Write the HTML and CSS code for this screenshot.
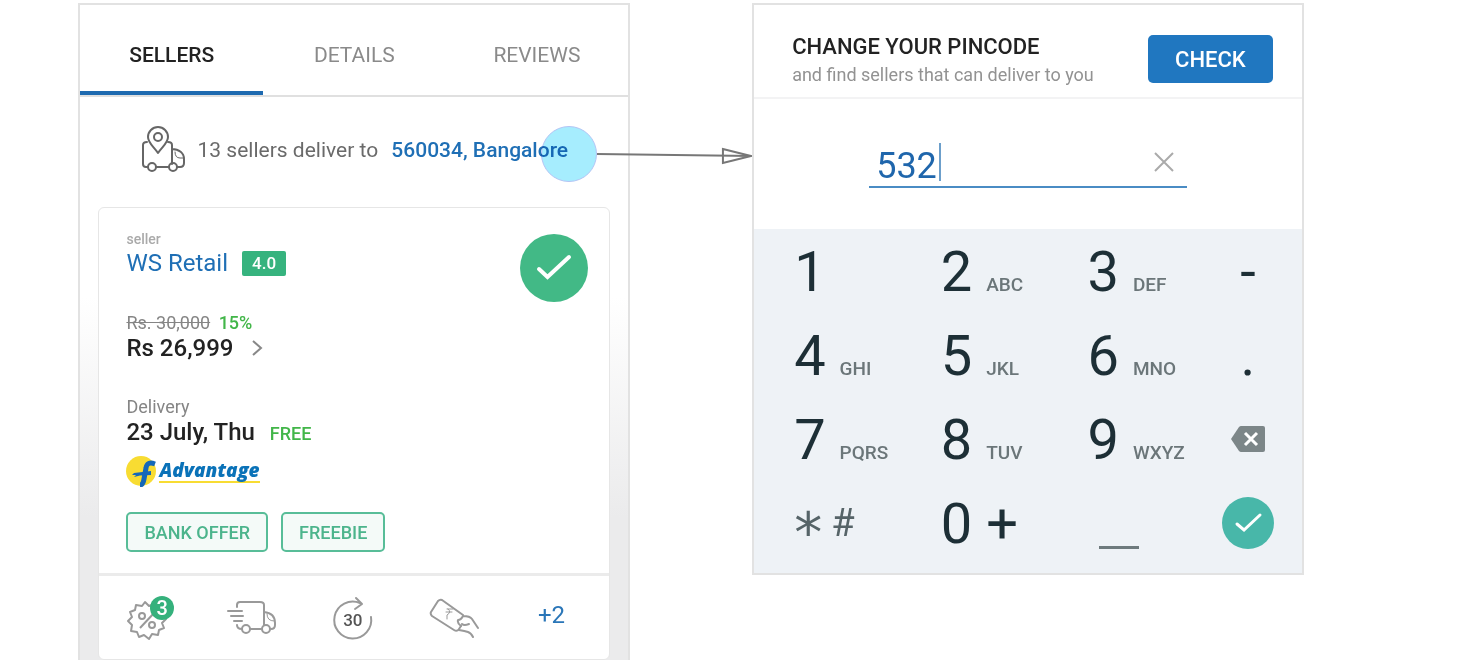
FILE: index.html
```html
<!DOCTYPE html>
<html lang="en">
<head>
<meta charset="utf-8">
<title>Sellers and pincode</title>
<meta name="viewport" content="width=device-width, initial-scale=1">
<link rel="stylesheet" href="styles.css">
</head>
<body>
<main class="flow">
  <section class="panel product">
    <nav class="tabs">
      <button class="tab tab-active" type="button">SELLERS</button>
      <button class="tab" type="button">DETAILS</button>
      <button class="tab" type="button">REVIEWS</button>
    </nav>
    <div class="panel-body">
      <div class="deliver">
        <svg class="deliver-icon" width="44" height="48" viewBox="0 0 44 48" fill="none" stroke="#666" stroke-width="2" stroke-linecap="round" stroke-linejoin="round">
          <path d="M6 16C3 16 2 17 2 19V38Q2 41 5 41H7M15 41H28M36 41H39Q43 41 43 37V33C43 27 38 23 31 23V38M27 16Q31 16 31 19V24"/>
          <path d="M17 27C13 21 7 17 7 11A10 10 0 0 1 27 11C27 17 21 21 17 27Z"/>
          <circle cx="17" cy="11" r="4"/><circle cx="11" cy="41" r="4"/><circle cx="32" cy="41" r="4"/>
          <path d="M34 26Q34 32 39 32H42" stroke-width="1"/>
        </svg>
        <p class="deliver-text">13 sellers deliver to <a class="place" href="#pincode">560034, Bangalore<span class="touch"></span></a></p>
      </div>
      <article class="card">
        <div class="card-body">
          <div class="card-head">
            <div>
              <p class="caption">seller</p>
              <p class="line seller"><a class="seller-link" href="#seller">WS Retail</a><span class="rating">4.0</span></p>
            </div>
            <svg class="chosen" width="70" height="70" viewBox="0 0 70 70"><circle cx="35" cy="35" r="34" fill="#42b986"/><path d="M20 36L28.500 44L50 24" fill="none" stroke="#fff" stroke-width="4" stroke-linecap="round"/></svg>
          </div>
          <div class="group">
            <p class="label"><s>Rs. 30,000</s> <span class="green">15%</span></p>
            <p class="line strong">Rs 26,999<svg class="chevron" width="12" height="18" viewBox="0 0 12 18"><path d="M2 2L10 9L2 16" fill="none" stroke="#888" stroke-width="2"/></svg></p>
          </div>
          <div class="group">
            <p class="label">Delivery</p>
            <p class="line strong">23 July, Thu<span class="free">FREE</span></p>
          </div>
          <div class="brand">
            <svg width="33" height="32" viewBox="0 0 33 32"><circle cx="15" cy="16" r="15" fill="#f8dc32"/><path d="M29 9Q21 6 20 13L18 24Q17 30 14 30" fill="none" stroke="#1468b8" stroke-width="5"/><path d="M8 18L25 16V20L14 20.500L8 22L10 20L6 20Z" fill="#1468b8"/></svg>
            <span class="brand-name">Advantage</span>
          </div>
          <div class="offers">
            <button class="offer" type="button">BANK OFFER</button>
            <button class="offer" type="button">FREEBIE</button>
          </div>
        </div>
        <footer class="perks">
          <button class="perk" type="button" aria-label="Offers">
            <svg width="50" height="46" viewBox="0 0 50 46" fill="none" stroke="#999" stroke-width="2" stroke-linejoin="round">
              <path d="M20 7L24 11L29 9L31 14L37 14L36 20L41 24L37 28L39 33L34 35L33 40L27 39L24 44L19 40L14 42L12 37L6 36L7 30L3 26L7 22L5 17L10 15L11 10L17 11Z"/>
              <circle cx="17" cy="21" r="3"/><circle cx="27" cy="30" r="3"/><path d="M15 33L30 17"/>
            </svg>
            <span class="count">3</span>
          </button>
          <button class="perk" type="button" aria-label="Fast delivery">
            <svg width="50" height="46" viewBox="0 0 50 46" fill="none" stroke="#999" stroke-width="2" stroke-linecap="round" stroke-linejoin="round">
              <path d="M11 12V10Q11 7 14 7H34Q38 7 38 10V30M38 17Q49 18 49 28V30Q49 34 45 34M35 34H24M16 34Q11 34 11 30"/>
              <path d="M2 16H16M5 21H17M8 26H16"/><circle cx="20" cy="34" r="4"/><circle cx="40" cy="34" r="4"/>
              <path d="M41 19Q41 26 48 26" stroke-width="1"/>
            </svg>
          </button>
          <button class="perk" type="button" aria-label="30 day returns">
            <svg width="50" height="46" viewBox="0 0 50 46" fill="none" stroke="#999" stroke-width="2" stroke-linecap="round" stroke-linejoin="round">
              <path d="M43 22A18.500 18.500 0 1 1 32 8M28 3L34 9L27 14"/>
            </svg>
            <span class="days">30</span>
          </button>
          <button class="perk" type="button" aria-label="Cash on delivery">
            <svg width="50" height="46" viewBox="0 0 50 46" fill="none" stroke="#999" stroke-width="2" stroke-linecap="round" stroke-linejoin="round">
              <path d="M34 20L13 5Q11 4 9 6L2 17Q1 19 3 21L25 35Q28 37 30 34L32 31"/>
              <path d="M18 14H24M17 17H23M19 14Q23 17 18 20L18 24" stroke-width="1"/>
              <path d="M34 21Q41 21 43 24T49 33M40 29Q35 31 33 29M34 21Q32 25 29 25Q28 28 32 31M30 35Q36 36 39 37T44 42"/>
            </svg>
          </button>
          <button class="perk more" type="button">+2</button>
        </footer>
      </article>
    </div>
  </section>

  <div class="connector">
    <svg class="arrow" height="20" aria-hidden="true">
      <line x1="0" y1="10" x2="100%" y2="12" stroke="#777" stroke-width="2"/>
      <svg x="100%" y="0" width="1" height="20" overflow="visible"><path d="M-29 5L-1 12L-29 19Z" fill="none" stroke="#777" stroke-width="2"/></svg>
    </svg>
  </div>

  <section class="panel pincode" id="pincode">
    <header class="pin-head">
      <div>
        <h1 class="pin-title">CHANGE YOUR PINCODE</h1>
        <p class="pin-sub">and find sellers that can deliver to you</p>
      </div>
      <button class="check" type="button">CHECK</button>
    </header>
    <div class="pin-entry">
      <div class="field">
        <input class="pin-input" type="text" inputmode="numeric" value="532" aria-label="Pincode">
        <span class="caret"></span>
        <button class="clear" type="button" aria-label="Clear"><svg width="22" height="22" viewBox="0 0 22 22"><path d="M2 2L20 20M20 2L2 20" stroke="#aaa" stroke-width="2"/></svg></button>
      </div>
    </div>
    <div class="keypad">
      <button class="key" type="button">1</button>
      <button class="key" type="button">2<span class="letters">ABC</span></button>
      <button class="key" type="button">3<span class="letters">DEF</span></button>
      <button class="key key-side" type="button">-</button>
      <button class="key" type="button">4<span class="letters">GHI</span></button>
      <button class="key" type="button">5<span class="letters">JKL</span></button>
      <button class="key" type="button">6<span class="letters">MNO</span></button>
      <button class="key key-side" type="button">.</button>
      <button class="key" type="button">7<span class="letters">PQRS</span></button>
      <button class="key" type="button">8<span class="letters">TUV</span></button>
      <button class="key" type="button">9<span class="letters">WXYZ</span></button>
      <button class="key key-side key-icon" type="button" aria-label="Delete"><svg width="34" height="26" viewBox="0 0 34 26"><path d="M10 0H32Q34 0 34 2V24Q34 26 32 26H10Q9 26 8 25L0 13L8 1Q9 0 10 0Z" fill="#7c8688"/><path d="M14 7L26 19M26 7L14 19" stroke="#fff" stroke-width="3"/></svg></button>
      <button class="key key-symbols" type="button"><span class="star">*</span><span class="hash">#</span></button>
      <button class="key" type="button">0<span class="plus">+</span></button>
      <button class="key key-space" type="button" aria-label="Space"><span class="space-bar"></span></button>
      <button class="key key-side key-icon" type="button" aria-label="Done"><svg width="52" height="52" viewBox="0 0 52 52"><circle cx="26" cy="26" r="26" fill="#48b7a9"/><path d="M15 27L22 33L38 18" fill="none" stroke="#fff" stroke-width="3" stroke-linecap="round"/></svg></button>
    </div>
  </section>
</main>
</body>
</html>
```
FILE: styles.css
```css
* { box-sizing: border-box; }
body { margin: 0; background: #fff; color: #222; font-family: Roboto, "Liberation Sans", sans-serif; }
p, h1 { margin: 0; }
button { border: 0; padding: 0; background: none; font: inherit; color: inherit; cursor: pointer; }
a { text-decoration: none; color: #1f6fb5; }
svg { display: block; flex: none; }

.flow {
  display: grid;
  grid-template-columns: 552fr 122fr 552fr;
  align-items: start;
  min-height: 100vh;
  padding: 3px 11.900% 0 5.300%;
}
.panel { border: 2px solid #e2e2e2; min-width: 0; }
.product { align-self: stretch; border-bottom: 0; display: flex; flex-direction: column; }

.tabs { display: grid; grid-template-columns: repeat(3, 1fr); border-bottom: 2px solid #e0e0e0; }
.tab { height: 90px; padding-top: 13px; border-bottom: 4px solid transparent; font-size: 21px; color: #8a8a8a; }
.tab-active { border-bottom-color: #1e6ab0; font-weight: 500; color: #222; }

.panel-body { flex: 1; padding: 0 18px; background: linear-gradient(#fff 200px, #ebebec 420px); }
.deliver { display: flex; align-items: center; justify-content: center; gap: 13px; height: 110px; padding-bottom: 4px; }
.deliver-text { font-size: 21px; line-height: 28px; color: #6a6a6a; white-space: nowrap; }
.place { position: relative; margin-left: 8px; font-weight: 500; }
.touch {
  position: absolute; right: -29px; top: -12px; width: 56px; height: 56px;
  border: 1px solid #b4c4f4; border-radius: 50%; background: #a6edfe; mix-blend-mode: multiply;
}

.card { border: 1px solid #e6e6e6; border-radius: 6px; background: #fff; }
.card-body { padding: 23px 20px 21px 27px; }
.card-head { display: flex; justify-content: space-between; }
.chosen { margin-top: 2px; }
.caption { font-size: 14px; line-height: 16px; font-weight: 500; color: #aaa; }
.line { display: flex; align-items: center; font-size: 24px; line-height: 28px; }
.seller { gap: 14px; line-height: 32px; }
.rating { width: 44px; border-radius: 2px; background: #36b37e; color: #fff; font-size: 17px; font-weight: 500; line-height: 25px; text-align: center; }
.group { margin-top: 34px; }
.card-head + .group { margin-top: 9px; }
.label { font-size: 18px; line-height: 22px; color: #858585; }
.strong { font-weight: 500; }
.green { margin-left: 4px; font-weight: 500; color: #42b649; }
.free { margin-left: 15px; padding-top: 4px; font-size: 18px; font-weight: 500; line-height: 24px; color: #42b649; }
.chevron { margin-left: 18px; }
.brand { display: flex; align-items: center; margin-top: 9px; }
.brand-name { border-bottom: 2px solid #f8dc32; font: italic 800 19px/22px "Open Sans", sans-serif; color: #0a72b8; }
.offers { display: flex; gap: 13px; margin-top: 25px; }
.offer { height: 40px; padding: 0 16px; border: 2px solid #58bd98; border-radius: 5px; background: #f4faf8; color: #4cb48c; font-size: 18px; font-weight: 500; }

.perks { display: grid; grid-template-columns: repeat(5, 1fr); align-items: center; height: 86px; padding-right: 3px; border-top: 3px solid #ebebeb; }
.perk { position: relative; justify-self: center; }
.count { position: absolute; right: 1px; top: 1px; width: 24px; border-radius: 50%; background: #35b17c; color: #fff; font-size: 20px; font-weight: 500; line-height: 24px; text-align: center; }
.days { position: absolute; inset: 0; color: #555; font-size: 17px; font-weight: 500; line-height: 50px; text-align: center; }
.more { padding: 0 8px 6px 0; color: #2a76b8; font-size: 24px; }

.connector { position: relative; height: 172px; }
.arrow { position: absolute; left: -33px; top: 141px; width: calc(100% + 33px); overflow: visible; }

.pin-head { display: flex; justify-content: space-between; align-items: flex-start; padding: 28px 29px 8px 38px; border-bottom: 2px solid #f3f3f4; }
.pin-title { font-size: 22px; font-weight: 500; line-height: 28px; }
.pin-sub { font-size: 18px; line-height: 28px; color: #929292; }
.check { width: 125px; height: 48px; margin-top: 2px; border-radius: 5px; background: #2077c0; color: #fff; font-size: 22px; font-weight: 500; }
.pin-entry { display: flex; justify-content: center; padding: 39px 0 41px; }
.field { display: flex; align-items: center; width: 58%; height: 50px; padding-left: 7px; padding-right: 12px; border-bottom: 2px solid #4a8cc4; }
.pin-input { width: 63px; padding: 8px 0 0; border: 0; outline: 0; background: none; font: 36px/42px Roboto, sans-serif; color: #1f66ac; }
.caret { width: 2px; height: 38px; background: #6c9fcb; }
.clear { margin-left: auto; }

.keypad { display: grid; grid-template-columns: 147fr 147fr 147fr 108fr; padding-bottom: 8px; background: #eef2f6; }
.key { display: flex; align-items: baseline; height: 84px; padding-left: 40px; color: #1d2f36; font-size: 56px; line-height: 86px; }
.key-side { justify-content: center; padding-left: 0; }
.key-icon { align-items: center; }
.letters { margin-left: 14px; color: #6b7679; font-size: 19px; font-weight: 500; }
.plus { margin-left: 14px; }
.key-symbols { align-items: center; gap: 9px; color: #566468; }
.star { padding-top: 20px; font-family: "DejaVu Sans", sans-serif; font-size: 56px; line-height: 64px; }
.hash { font-size: 38px; }
.key-space { align-items: flex-end; padding: 0 0 16px 52px; }
.space-bar { width: 40px; height: 3px; background: #6e7a7d; }
```
